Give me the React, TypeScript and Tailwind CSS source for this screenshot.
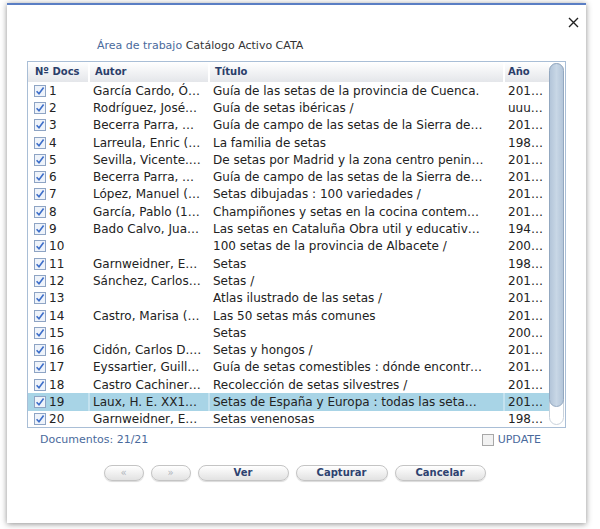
import React from "react";

// filas del catálogo, tal como se ven (ya recortadas)
const rows = [
  { n: 1, autor: "García Cardo, Ó…", titulo: "Guía de las setas de la provincia de Cuenca.", anio: "201…" },
  { n: 2, autor: "Rodríguez, José…", titulo: "Guía de setas ibéricas /", anio: "uuu…" },
  { n: 3, autor: "Becerra Parra, …", titulo: "Guía de campo de las setas de la Sierra de…", anio: "201…" },
  { n: 4, autor: "Larreula, Enric (…", titulo: "La familia de setas", anio: "198…" },
  { n: 5, autor: "Sevilla, Vicente.…", titulo: "De setas por Madrid y la zona centro penin…", anio: "201…" },
  { n: 6, autor: "Becerra Parra, …", titulo: "Guía de campo de las setas de la Sierra de…", anio: "201…" },
  { n: 7, autor: "López, Manuel (…", titulo: "Setas dibujadas : 100 variedades /", anio: "201…" },
  { n: 8, autor: "García, Pablo (1…", titulo: "Champiñones y setas en la cocina contem…", anio: "201…" },
  { n: 9, autor: "Bado Calvo, Jua…", titulo: "Las setas en Cataluña Obra util y educativ…", anio: "194…" },
  { n: 10, autor: "", titulo: "100 setas de la provincia de Albacete /", anio: "200…" },
  { n: 11, autor: "Garnweidner, E…", titulo: "Setas", anio: "198…" },
  { n: 12, autor: "Sánchez, Carlos…", titulo: "Setas /", anio: "201…" },
  { n: 13, autor: "", titulo: "Atlas ilustrado de las setas /", anio: "201…" },
  { n: 14, autor: "Castro, Marisa (…", titulo: "Las 50 setas más comunes", anio: "201…" },
  { n: 15, autor: "", titulo: "Setas", anio: "200…" },
  { n: 16, autor: "Cidón, Carlos D.…", titulo: "Setas y hongos /", anio: "201…" },
  { n: 17, autor: "Eyssartier, Guill…", titulo: "Guía de setas comestibles : dónde encontr…", anio: "201…" },
  { n: 18, autor: "Castro Cachiner…", titulo: "Recolección de setas silvestres /", anio: "201…" },
  { n: 19, autor: "Laux, H. E. XX1…", titulo: "Setas de España y Europa : todas las seta…", anio: "201…" },
  { n: 20, autor: "Garnweidner, E…", titulo: "Setas venenosas", anio: "198…" },
];

function Check({ on = true }: { on?: boolean }) {
  return (
    <svg width="12" height="12" viewBox="0 0 12 12" className="shrink-0">
      <rect x="0.5" y="0.5" width="11" height="11" fill={on ? "#eef3fa" : "#f2f2f2"} stroke={on ? "#8ea4c4" : "#a8a8a8"} />
      {on && <path d="M2.6 6.2 L5 8.8 L9.6 2.6" fill="none" stroke="#3d6ec9" strokeWidth="1.6" />}
    </svg>
  );
}

function Btn({ label, w, muted }: { label: string; w: string; muted?: boolean }) {
  return (
    <div
      className={`${w} h-[16px] rounded-full border border-[#c4c4c4] bg-gradient-to-b from-white to-[#e2e2e2] shadow-[0_1px_1px_rgba(0,0,0,0.15)] flex items-center justify-center text-[10px] leading-none ${muted ? "text-[#b0b4bc] font-normal" : "text-[#2d4270] font-bold"}`}
    >
      {label}
    </div>
  );
}

export default function App() {
  return (
    <div className="w-[600px] h-[529px] bg-white overflow-hidden" style={{ fontFamily: '"DejaVu Sans", Verdana, sans-serif' }}>
      <div className="ml-[7px] mt-[3px] w-[579px] h-[520px] bg-white border-t-2 border-[#5a7ec4] shadow-[0_1px_6px_rgba(0,0,0,0.45)] flex flex-col">
        {/* cierre */}
        <div className="h-[34px] flex justify-end pr-[7px] pt-[12px]">
          <svg width="11" height="11" viewBox="0 0 11 11">
            <path d="M1 1 L10 10 M10 1 L1 10" stroke="#222" strokeWidth="1.4" />
          </svg>
        </div>

        {/* área de trabajo */}
        <div className="pl-[90px] h-[22px] text-[11px] leading-[14px]">
          <span className="text-[#4a6a9c]">Área de trabajo</span> <span className="text-[#333]">Catálogo Activo CATA</span>
        </div>

        {/* tabla */}
        <div className="ml-[20px] w-[539px] h-[367px] border border-[#a9bed6] flex">
          <div className="flex-1 flex flex-col">
            <div className="h-[20px] flex bg-gradient-to-b from-white to-[#e4e6ea] text-[10px] font-bold text-[#2a3e6a] leading-[20px]">
              <div className="w-[62px] pl-[7px] border-r-2 border-white">Nº Docs</div>
              <div className="w-[120px] pl-[5px] border-r-2 border-white">Autor</div>
              <div className="w-[295px] pl-[5px] border-r-2 border-white">Título</div>
              <div className="flex-1 pl-[3px]">Año</div>
            </div>
            {rows.map((r) => {
              const sel = r.n === 19;
              const sep = sel ? "border-r-2 border-[#c4e2ef]" : "border-r-2 border-transparent";
              return (
                <div
                  key={r.n}
                  className={`h-[17.3px] flex items-center text-[12px] text-[#222] ${sel ? "bg-[#a8d4e6]" : ""}`}
                >
                  <div className={`w-[62px] h-full flex items-center pl-[6px] gap-[3px] ${sep}`}>
                    <Check />
                    <span>{r.n}</span>
                  </div>
                  <div className={`w-[120px] h-full flex items-center pl-[3px] whitespace-nowrap overflow-hidden ${sep}`}>
                    {r.autor}
                  </div>
                  <div className={`w-[295px] h-full flex items-center pl-[3px] whitespace-nowrap overflow-hidden ${sep}`}>
                    {r.titulo}
                  </div>
                  <div className="flex-1 pl-[3px] whitespace-nowrap overflow-hidden">{r.anio}</div>
                </div>
              );
            })}
          </div>
          {/* barra de desplazamiento */}
          <div className="w-[16px] pt-[1px] pb-[2px] pr-[1px] flex">
            <div className="flex-1 rounded-full border border-[#c9d2dc] bg-white flex flex-col">
              <div className="h-[344px] rounded-full border border-[#93a8c0] bg-gradient-to-r from-[#b3c5d9] via-[#c8d7e6] to-[#b3c5d9] -m-px" />
            </div>
          </div>
        </div>

        {/* pie */}
        <div className="h-[24px] flex items-center justify-between pl-[33px] pr-[45px] text-[11px]">
          <span className="text-[#4a6a9c]">Documentos: 21/21</span>
          <span className="flex items-center gap-[4px] text-[#4a6a9c]">
            <Check on={false} />
            UPDATE
          </span>
        </div>

        <div className="mt-[13px] flex justify-center gap-[7px] pr-[4px]">
          <Btn label="«" w="w-[40px]" muted />
          <Btn label="»" w="w-[40px]" muted />
          <Btn label="Ver" w="w-[91px]" />
          <Btn label="Capturar" w="w-[92px]" />
          <Btn label="Cancelar" w="w-[91px]" />
        </div>
      </div>
    </div>
  );
}
